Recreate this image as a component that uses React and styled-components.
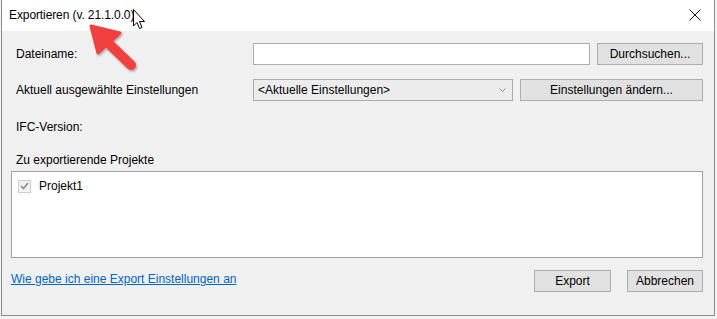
import React from "react";
import styled, { createGlobalStyle } from "styled-components";

const GlobalStyle = createGlobalStyle`
  html, body {
    margin: 0;
    padding: 0;
    background: #f3f3f3;
    overflow: hidden;
  }
  body {
    font-family: "Liberation Sans", Arial, sans-serif;
    font-size: 12px;
    color: #000;
  }
`;

const Frame = styled.div`
  position: relative;
  width: 714px;
  height: 316px;
  margin-left: 1px;
  border-left: 1px solid #8c8c8c;
  border-right: 1px solid #8c8c8c;
  border-bottom: 1px solid #8c8c8c;
  background: #f0f0f0;
  display: flex;
  flex-direction: column;
  box-sizing: border-box;
`;

const TitleBar = styled.div`
  height: 31px;
  background: #fff;
  display: flex;
  align-items: center;
  justify-content: space-between;
  padding: 0 13px 0 7px;
  flex-shrink: 0;
`;

const Title = styled.span`
  font-size: 12px;
  letter-spacing: -0.1px;
  margin-top: -2px;
`;

const CloseIcon = styled.svg`
  width: 12px;
  height: 12px;
  margin-top: -1px;
`;

const Body = styled.div`
  flex: 1;
  display: flex;
  flex-direction: column;
  padding: 12px 11px 0 9px;
`;

const Row = styled.div`
  display: flex;
  align-items: center;
  height: 22px;
  margin-bottom: ${(p) => p.$gap || 0}px;
`;

const Label = styled.div`
  width: 242px;
  padding-left: 5px;
  box-sizing: border-box;
  flex-shrink: 0;
`;

const TextField = styled.div`
  width: 337px;
  height: 22px;
  box-sizing: border-box;
  border: 1px solid #abadb3;
  background: #fff;
`;

const Select = styled.div`
  width: 260px;
  height: 22px;
  box-sizing: border-box;
  border: 1px solid #acacac;
  background: #ececec;
  display: flex;
  align-items: center;
  justify-content: space-between;
  padding: 0 6px 0 4px;
`;

const Chevron = styled.svg`
  width: 7px;
  height: 5px;
`;

const Button = styled.div`
  width: ${(p) => p.$w}px;
  height: 22px;
  box-sizing: border-box;
  border: 1px solid #adadad;
  background: #e1e1e1;
  display: flex;
  align-items: center;
  justify-content: center;
  margin-left: ${(p) => p.$ml || 0}px;
`;

const Text = styled.div`
  padding-left: 5px;
  height: 22px;
  display: flex;
  align-items: center;
  margin-bottom: ${(p) => p.$gap || 0}px;
`;

const ListBox = styled.div`
  height: 87px;
  box-sizing: border-box;
  border: 1px solid #a0a0a0;
  background: #fff;
  padding: 7px 0 0 6px;
`;

const Item = styled.div`
  display: flex;
  align-items: center;
  gap: 8px;
`;

const Check = styled.div`
  width: 13px;
  height: 13px;
  box-sizing: border-box;
  border: 1px solid #cccccc;
  background: #f2f2f2;
  display: flex;
  align-items: center;
  justify-content: center;
`;

const Footer = styled.div`
  display: flex;
  align-items: center;
  margin-top: 12px;
  height: 22px;
`;

const HelpLink = styled.a`
  color: #0066cc;
  text-decoration: underline;
  flex: 1;
  margin-top: -4px;
`;

const Overlay = styled.svg`
  position: absolute;
  left: 0;
  top: 0;
  pointer-events: none;
`;

export default function App() {
  return (
    <>
      <GlobalStyle />
      <Frame>
        <TitleBar>
          <Title>Exportieren (v. 21.1.0.0)</Title>
          <CloseIcon viewBox="0 0 12 12">
            <path d="M0.5 0.5 L11.5 11.5 M11.5 0.5 L0.5 11.5" stroke="#111" strokeWidth="1" />
          </CloseIcon>
        </TitleBar>
        <Body>
          <Row $gap={14}>
            <Label>Dateiname:</Label>
            <TextField />
            <Button $w={106} $ml={7}>Durchsuchen...</Button>
          </Row>
          <Row $gap={15}>
            <Label>Aktuell ausgewählte Einstellungen</Label>
            <Select>
              <span>&lt;Aktuelle Einstellungen&gt;</span>
              <Chevron viewBox="0 0 7 5">
                <path d="M0.5 0.5 L3.5 3.5 L6.5 0.5" fill="none" stroke="#888" strokeWidth="1" />
              </Chevron>
            </Select>
            <Button $w={183} $ml={7}>Einstellungen ändern...</Button>
          </Row>
          <Text $gap={11}>IFC-Version:</Text>
          <Text>Zu exportierende Projekte</Text>
          <ListBox>
            <Item>
              <Check>
                <svg width="9" height="8" viewBox="0 0 9 8">
                  <path d="M1 4 L3.5 6.5 L8 1" fill="none" stroke="#8a8a8a" strokeWidth="1.6" />
                </svg>
              </Check>
              <span>Projekt1</span>
            </Item>
          </ListBox>
          <Footer>
            <HelpLink>Wie gebe ich eine Export Einstellungen an</HelpLink>
            <Button $w={77}>Export</Button>
            <Button $w={76} $ml={16}>Abbrechen</Button>
          </Footer>
        </Body>
        <Overlay width="160" height="80" viewBox="0 0 160 80">
          <defs>
            <filter id="sh" x="-30%" y="-30%" width="160%" height="160%">
              <feDropShadow dx="1" dy="1.5" stdDeviation="1.2" floodColor="#000" floodOpacity="0.35" />
            </filter>
          </defs>
          <g filter="url(#sh)">
            <path d="M89 26 L118 33 L96 53 Z" fill="#f1403e" stroke="#f1403e" strokeWidth="3" strokeLinejoin="round" />
            <path d="M103 40 L129 65" stroke="#f1403e" strokeWidth="10" strokeLinecap="round" />
          </g>
          <path
            d="M131.5 9.5 L131.5 26 L135 22.5 L137.5 28.5 L140 27.5 L137.5 21.5 L142.5 21.5 Z"
            fill="#fff"
            stroke="#000"
            strokeWidth="1"
            strokeLinejoin="round"
          />
        </Overlay>
      </Frame>
    </>
  );
}
